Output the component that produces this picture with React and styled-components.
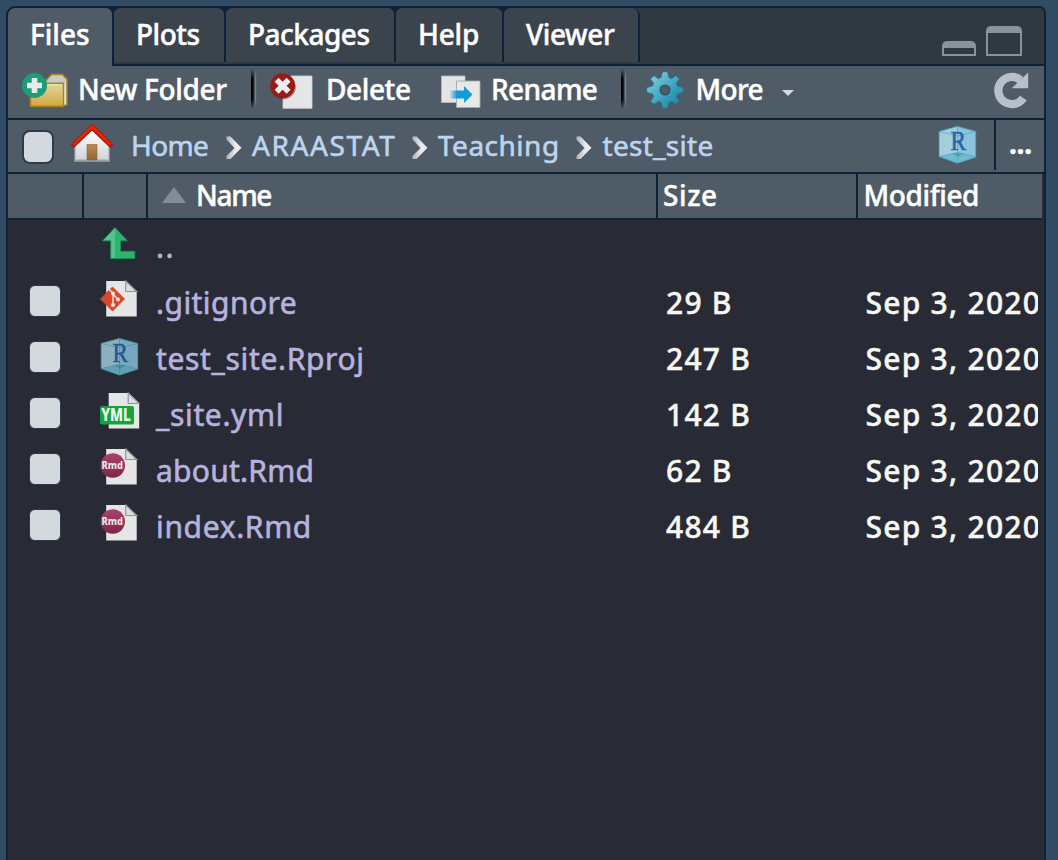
import React from 'react';
import styled, { createGlobalStyle } from 'styled-components';

const line = '#0c2238';
const chrome = '#4f5b66';

const GlobalStyle = createGlobalStyle`
  *, *::before, *::after { box-sizing: border-box; }
  html, body { margin: 0; height: 100%; }
  body {
    background: #314b62;
    font-family: "Noto Sans", "Open Sans", sans-serif;
    font-size: 28px;
    font-weight: 500;
    -webkit-text-stroke: 0.45px;
    color: #fff;
    overflow: hidden;
  }
  svg { display: block; flex: none; }
  svg text { -webkit-text-stroke: 0; }
`;

const Page = styled.div`
  height: 860px;
  width: 1058px;
  padding: 6px 12px 0 6px;
  overflow: hidden;
`;

const Panel = styled.section`
  height: 100%;
  border: 2px solid ${line};
  border-bottom: 0;
  border-radius: 9px 7px 0 0;
  background: #282a36;
  overflow: hidden;
  display: flex;
  flex-direction: column;
`;

const TabBar = styled.div`
  flex: none;
  height: 58px;
  display: flex;
  background: linear-gradient(${line}, ${line}) bottom / 100% 2px no-repeat #303841;
`;

const Tab = styled.div`
  width: ${(p) => p.$width}px;
  height: ${(p) => (p.$active ? 58 : 54)}px;
  padding: 0 0 4px ${(p) => p.$inset}px;
  line-height: 52px;
  white-space: nowrap;
  letter-spacing: ${(p) => p.$track}px;
  background: ${(p) => (p.$active ? chrome : '#3b444c')};
  border-radius: 6px 6px 0 0;
`;

const TabSlot = styled.div`
  background: ${line};
  padding-right: 2px;
  height: ${(p) => (p.$active ? 58 : 54)}px;
  border-top-right-radius: ${(p) => (p.$last ? 8 : 0)}px;
`;

const WindowButtons = styled.div`
  margin-left: auto;
  padding: 18px 22px 0 0;
  height: 48px;
  display: flex;
  align-items: flex-end;
  gap: 10px;
`;

const WindowGlyph = styled.div`
  width: ${(p) => p.$width}px;
  height: ${(p) => p.$height}px;
  border: 2px solid #8a9399;
  border-top-width: 7px;
  border-radius: 5px 5px 0 0;
`;

const Toolbar = styled.div`
  flex: none;
  height: 54px;
  padding: 0 14px;
  display: flex;
  background: ${chrome};
  border-bottom: 2px solid ${line};
`;

const ToolButton = styled.div`
  display: flex;
  align-items: center;
  width: ${(p) => p.$width}px;
  height: 46px;
  gap: 10px;
  white-space: nowrap;
  letter-spacing: ${(p) => p.$track}px;
`;

const ToolIcon = styled.div`
  width: ${(p) => p.$width}px;
  padding-top: 2px;
`;

const Separator = styled.div`
  width: 6px;
  height: 40px;
  margin-top: 3px;
  margin-right: ${(p) => p.$after}px;
  background: linear-gradient(90deg, #000 0 2px, #1c2227 2px 3px, #47525c 3px 4px, #77818a 4px 5px, #57626d 5px 6px);
  mask-image: linear-gradient(transparent, #000 25%, #000 75%, transparent);
`;

const Caret = styled.span`
  margin: 7px 0 0 9px;
  border: 6px solid transparent;
  border-top: 6px solid #d5d7da;
  border-bottom: 0;
`;

const Refresh = styled.div`
  margin-left: auto;
  padding-top: 5px;
`;

const PathBar = styled.div`
  flex: none;
  height: 54px;
  padding-left: 14px;
  display: flex;
  align-items: center;
  background: ${chrome};
  border-bottom: 2px solid ${line};
`;

const SelectAll = styled.span`
  flex: none;
  width: 32px;
  height: 34px;
  margin-top: 2px;
  border-radius: 8px;
  border: 2px solid #2b3c4c;
  background: #d3d9de;
`;

const RowCheck = styled.span`
  display: block;
  width: 32px;
  height: 32px;
  border-radius: 6px;
  border: 1px solid #2a3a48;
  background: #d3d9dd;
`;

const HomeIcon = styled.div`
  margin: 0 17px 6px 16px;
`;

const Crumb = styled.span`
  width: ${(p) => p.$width}px;
  padding-bottom: 2px;
  font-weight: 400;
  -webkit-text-stroke: 0.6px;
  color: #bcd4ee;
  white-space: nowrap;
  letter-spacing: ${(p) => p.$track}px;
`;

const CrumbArrow = styled.div`
  width: ${(p) => p.$width}px;
  padding-top: 3px;
`;

const ProjectMenu = styled.div`
  margin-left: auto;
  padding: 0 16px 2px 0;
`;

const Browse = styled.div`
  align-self: flex-start;
  height: 50px;
  width: 50px;
  padding-left: 13px;
  border-left: 2px solid ${line};
  line-height: 46px;
  font-weight: 700;
  letter-spacing: -0.3px;
`;

const TableHead = styled.div`
  flex: none;
  height: 46px;
  width: 1034px;
  display: grid;
  grid-template-columns: 76px 64px 510px 200px 1fr;
  background: ${chrome};
  border-bottom: 2px solid ${line};
`;

const HeadCell = styled.div`
  display: flex;
  align-items: center;
  gap: 10px;
  padding: 0 0 2px ${(p) => p.$inset || 0}px;
  border-right: 2px solid ${line};
  letter-spacing: ${(p) => p.$track || 0}px;
  &:last-child { border-right: 0; }
`;

const SortArrow = styled.span`
  border: 12px solid transparent;
  border-bottom: 16px solid #848c9b;
  border-top: 0;
`;

const Row = styled.div`
  flex: none;
  width: 1030px;
  height: 56px;
  display: grid;
  grid-template-columns: 92px 56px 510px 199.5px minmax(0, 1fr);
  font-size: 30px;
  line-height: 53px;
  white-space: nowrap;
`;

const CheckCell = styled.div`
  padding: 9px 0 0 21px;
`;

const IconCell = styled.div`
  padding-top: ${(p) => p.$drop || 2}px;
`;

const FileName = styled.div`
  color: #b6b2de;
  font-weight: 400;
  -webkit-text-stroke: 0.6px;
  letter-spacing: ${(p) => p.$track}px;
`;

const Value = styled.div`
  color: #f8f8f2;
  letter-spacing: 1.25px;
  overflow: hidden;
`;

const NewFolderIcon = () => (
  <svg width="48" height="40" viewBox="22 70.5 48 40">
    <defs>
      <linearGradient id="folder" x1="0" y1="0" x2="0" y2="1">
        <stop offset="0" stopColor="#e2d79c" /><stop offset="1" stopColor="#d2a842" />
      </linearGradient>
    </defs>
    <path d="M46 84v-3l5.500-6H62.500L67 80v25.500h-4z" fill="#c9cbca" stroke="#a7851f" strokeWidth="1.500" />
    <path d="M63.800 84h2.200v21h-2.200z" fill="#e4e4e2" />
    <path d="M30.500 83.700h33v23h-33z" fill="url(#folder)" stroke="#a7851f" strokeWidth="1.500" />
    <path d="M31.800 85.300h30.400" stroke="#ede6bd" strokeWidth="1" />
    <circle cx="34.500" cy="86" r="12.500" fill="#1e9b78" />
    <path d="M34.500 78.500v15M27 86h15" stroke="#e4ebe8" strokeWidth="5.600" />
  </svg>
);

const DeleteIcon = () => (
  <svg width="46" height="40" viewBox="268 70 46 40">
    <path d="M283 76h29v32.300H283z" fill="#e6e6e6" stroke="#d0d2d4" strokeWidth="0.800" />
    <circle cx="283.500" cy="87" r="12.500" fill="#3a2c30" opacity="0.350" />
    <circle cx="282.600" cy="85.800" r="12.500" fill="#981c16" />
    <path d="M276.600 79.800l12 12M288.600 79.800l-12 12" stroke="#ededed" strokeWidth="5.600" />
  </svg>
);

const RenameIcon = () => (
  <svg width="42" height="40" viewBox="440 70.500 42 40">
    <defs>
      <linearGradient id="arrow"><stop offset="0" stopColor="#129bd5" stopOpacity="0.100" /><stop offset="0.300" stopColor="#129bd5" /></linearGradient>
    </defs>
    <path d="M441.500 76.500h23.500v26.500h-23.500z" fill="#e4e4e4" stroke="#b9bdc1" strokeWidth="0.800" />
    <path d="M456.500 81.500h23.500v26.500h-23.500z" fill="#e8e8e8" stroke="#a4a9ae" strokeWidth="0.900" />
    <path d="M450 91h14v-4.500l8.500 8.500-8.500 8.500v-4.500h-14z" fill="url(#arrow)" />
  </svg>
);

const GearIcon = () => (
  <svg width="40" height="40" viewBox="-20 -20 40 40">
    <defs>
      <linearGradient id="gear" x1="0" y1="0" x2="1" y2="1">
        <stop offset="0.100" stopColor="#7fcfdc" /><stop offset="0.600" stopColor="#35a0bd" /><stop offset="1" stopColor="#1d7898" />
      </linearGradient>
    </defs>
    <path
      d="M-4-12.500L-2.500-18.300H2.500L4-12.500A13 13 0 0 1 6.500-11.300L11-14.500L14.500-11L11.300-6.500A13 13 0 0 1 12.500-4L18.300-2.500V2.500L12.500 4A13 13 0 0 1 11.300 6.500L14.500 11L11 14.500L6.500 11.300A13 13 0 0 1 4 12.500L2.500 18.300H-2.500L-4 12.500A13 13 0 0 1-6.500 11.300L-11 14.500L-14.500 11L-11.300 6.500A13 13 0 0 1-12.500 4L-18.300 2.500V-2.500L-12.500-4A13 13 0 0 1-11.300-6.500L-14.500-11L-11-14.500L-6.500-11.300A13 13 0 0 1-4-12.500Z"
      fill="url(#gear)" stroke="#2a6f88" strokeWidth="0.900" strokeLinejoin="round"
    />
    <circle r="4.800" fill="#4f5b66" stroke="#2b5568" strokeWidth="1.400" />
  </svg>
);

const RefreshIcon = () => (
  <svg width="38" height="38" viewBox="992 71 38 38">
    <path d="M1023.300 98A13.600 13.600 0 1 1 1020.500 80" fill="none" stroke="#b8bfcb" strokeWidth="8.200" />
    <path d="M1028.200 72.500v15.700h-16.500z" fill="#b8bfcb" />
  </svg>
);

const HouseIcon = () => (
  <svg width="44" height="42" viewBox="70 122 44 42">
    <defs>
      <linearGradient id="wall" x1="0" y1="0" x2="0" y2="1"><stop offset="0" stopColor="#fff" /><stop offset="1" stopColor="#cfd3da" /></linearGradient>
      <linearGradient id="door" x1="0" y1="0" x2="0" y2="1"><stop offset="0" stopColor="#c08a50" /><stop offset="1" stopColor="#936637" /></linearGradient>
    </defs>
    <path d="M75 145l17-15.500 17 15.500v16H75z" fill="url(#wall)" stroke="#a4b0b6" strokeWidth="1.200" />
    <path d="M74.500 160.500h35" stroke="#98a5aa" strokeWidth="2" />
    <path d="M87 144.500h10v15.500H87z" fill="url(#door)" stroke="#8a6234" strokeWidth="0.600" />
    <path d="M72.300 146L92 127.300 111.700 146" fill="none" stroke="#a51509" strokeWidth="5" />
    <path d="M73 144.800L92 126.800l19 18" fill="none" stroke="#e02408" strokeWidth="3.200" />
  </svg>
);

const ChevronIcon = () => (
  <svg width="16" height="24" viewBox="0 0 16 24">
    <defs><linearGradient id="chev" x1="0" y1="0" x2="1" y2="0"><stop offset="0" stopColor="#aeb3b8" /><stop offset="0.600" stopColor="#e9ebee" /></linearGradient></defs>
    <path d="M.500 .500H4.500L15.500 11.800 4.500 23H.500v-3L8.500 12 .500 3.500z" fill="url(#chev)" />
  </svg>
);

const RCubeIcon = ({ dim }) => (
  <svg width="40" height="40" viewBox="0 0 40 40" opacity={dim ? 0.82 : 1}>
    <path d="M19.500 1.500L37.700 6.500v25.500L19.500 38 1.200 31.500V6.500z" fill="#8ac3dc" />
    <path d="M19.500 1.500V38L1.200 31.500V6.500z" fill="#a3cede" />
    <path d="M1.200 31.500L19.500 27.500 37.700 32 19.500 38z" fill="#6fbcd1" />
    <path d="M19.500 1.500L37.700 6.500v25.500L19.500 38 1.200 31.500V6.500z" fill="none" stroke="#55aabd" strokeWidth="0.900" />
    <path d="M19.500 1.500V38M1.200 6.500l18.300 4.500L37.700 6.500M1.200 31.500L19.500 27.500 37.700 32" fill="none" stroke="#45a9b8" strokeWidth="0.700" />
    <text x="12.500" y="24.500" fontFamily="Liberation Serif, serif" fontSize="27" fill="#2b62a8" stroke="#2b62a8" strokeWidth="0.600" textLength="15.500" lengthAdjust="spacingAndGlyphs">R</text>
    <path d="M13.500 28.300h12l-5 3.500z" fill="#3f8ba8" opacity="0.600" />
  </svg>
);

const UpIcon = () => (
  <svg width="40" height="40" viewBox="0 0 40 40">
    <path d="M15 5.500L27.300 18.800H20.500v10.500H34.800v7.200H10.800V18.800H2.700z" fill="#2bb36f" stroke="#1e8e55" strokeWidth="1" />
    <path d="M15 6.300v29.700h-3.700V18.300H3.800z" fill="#55c38a" />
  </svg>
);

const Sheet = ({ x }) => (
  <>
    <path d={`M${x} 3h20l10.500 10.500v25h-30.500z`} fill="#e6e6e6" />
    <path d={`M${x + 19.5} 3v10.500h11z`} fill="#dcdfe2" stroke="#8f959b" strokeWidth="1.200" />
  </>
);

const GitIcon = () => (
  <svg width="40" height="40" viewBox="0 0 40 40">
    <Sheet x={6.2} />
    <path d="M12.500 9L24.500 21 12.500 33 .500 21z" fill="#d5492c" stroke="#d5492c" strokeWidth="1" strokeLinejoin="round" />
    <path d="M9 11l4 4.500V27M13 16l5 5.500" stroke="#f5d8cf" strokeWidth="1.600" fill="none" />
    <circle cx="13" cy="15.500" r="1.900" fill="#f8e8e3" /><circle cx="13" cy="27" r="2.100" fill="#f8e8e3" /><circle cx="18" cy="21.500" r="1.900" fill="#f8e8e3" />
  </svg>
);

const YmlIcon = () => (
  <svg width="40" height="40" viewBox="0 0 40 40">
    <Sheet x={8.7} />
    <rect x="0" y="16" width="34" height="18.500" rx="2" fill="#12a53f" />
    <text x="1.200" y="31.300" fontFamily="Noto Sans, sans-serif" fontWeight="800" fontSize="18" fill="#f2faf3" textLength="29.500" lengthAdjust="spacingAndGlyphs">YML</text>
  </svg>
);

const RmdIcon = () => (
  <svg width="40" height="40" viewBox="0 0 40 40">
    <defs><linearGradient id="rmd" x1="0" y1="0" x2="0" y2="1"><stop offset="0" stopColor="#aa426c" /><stop offset="1" stopColor="#7d2747" /></linearGradient></defs>
    <Sheet x={6.2} />
    <circle cx="12.800" cy="19.500" r="12.200" fill="url(#rmd)" />
    <text x="1.500" y="22.600" fontFamily="Noto Sans, sans-serif" fontWeight="800" fontSize="11" fill="#f2e3ea" textLength="21.500" lengthAdjust="spacingAndGlyphs">Rmd</text>
  </svg>
);

const tabs = [
  { label: 'Files', width: 104, inset: 22, track: 0 },
  { label: 'Plots', width: 110, inset: 22, track: -0.5 },
  { label: 'Packages', width: 168, inset: 22, track: -0.5 },
  { label: 'Help', width: 106, inset: 22, track: -0.2 },
  { label: 'Viewer', width: 134, inset: 22, track: -0.4 },
];

const files = [
  { name: '.gitignore', icon: <GitIcon />, size: '29 B', track: 0.45 },
  { name: 'test_site.Rproj', icon: <RCubeIcon dim />, size: '247 B', track: 0.65, drop: 5 },
  { name: '_site.yml', icon: <YmlIcon />, size: '142 B', track: 0.65 },
  { name: 'about.Rmd', icon: <RmdIcon />, size: '62 B', track: 0.25 },
  { name: 'index.Rmd', icon: <RmdIcon />, size: '484 B', track: 0.65 },
];

export default function App() {
  return (
    <Page>
      <GlobalStyle />
      <Panel>
        <TabBar>
          {tabs.map((t, i) => (
            <TabSlot key={t.label} $active={i === 0} $last={i === tabs.length - 1}>
              <Tab $active={i === 0} $width={t.width} $inset={t.inset} $track={t.track}>{t.label}</Tab>
            </TabSlot>
          ))}
          <WindowButtons>
            <WindowGlyph $width={34} $height={15} />
            <WindowGlyph $width={36} $height={30} />
          </WindowButtons>
        </TabBar>

        <Toolbar>
          <ToolButton $width={229} $track={-0.3}>
            <ToolIcon $width={46}><NewFolderIcon /></ToolIcon>New Folder
          </ToolButton>
          <Separator $after={11} />
          <ToolButton $width={172} $track={-0.4}>
            <ToolIcon $width={48}><DeleteIcon /></ToolIcon>Delete
          </ToolButton>
          <ToolButton $width={181} $track={-0.6}>
            <ToolIcon $width={41}><RenameIcon /></ToolIcon>Rename
          </ToolButton>
          <Separator $after={18} />
          <ToolButton $width={180} $track={-0.7}>
            <ToolIcon $width={40.5}><GearIcon /></ToolIcon>More<Caret />
          </ToolButton>
          <Refresh><RefreshIcon /></Refresh>
        </Toolbar>

        <PathBar>
          <SelectAll />
          <HomeIcon><HouseIcon /></HomeIcon>
          <Crumb $width={95} $track={-0.6}>Home</Crumb>
          <CrumbArrow $width={26}><ChevronIcon /></CrumbArrow>
          <Crumb $width={160} $track={1.6}>ARAASTAT</Crumb>
          <CrumbArrow $width={26}><ChevronIcon /></CrumbArrow>
          <Crumb $width={138} $track={0.5}>Teaching</Crumb>
          <CrumbArrow $width={26.5}><ChevronIcon /></CrumbArrow>
          <Crumb $width={120} $track={0.3}>test_site</Crumb>
          <ProjectMenu><RCubeIcon /></ProjectMenu>
          <Browse>...</Browse>
        </PathBar>

        <TableHead>
          <HeadCell />
          <HeadCell />
          <HeadCell $inset={14} $track={-1.3}><SortArrow />Name</HeadCell>
          <HeadCell $inset={5} $track={0.6}>Size</HeadCell>
          <HeadCell $inset={5.5} $track={-0.4}>Modified</HeadCell>
        </TableHead>

        <Row>
          <CheckCell />
          <IconCell><UpIcon /></IconCell>
          <FileName $track={1.5}>..</FileName>
        </Row>
        {files.map((f) => (
          <Row key={f.name}>
            <CheckCell><RowCheck /></CheckCell>
            <IconCell $drop={f.drop}>{f.icon}</IconCell>
            <FileName $track={f.track}>{f.name}</FileName>
            <Value>{f.size}</Value>
            <Value>Sep 3, 2020</Value>
          </Row>
        ))}
      </Panel>
    </Page>
  );
}
